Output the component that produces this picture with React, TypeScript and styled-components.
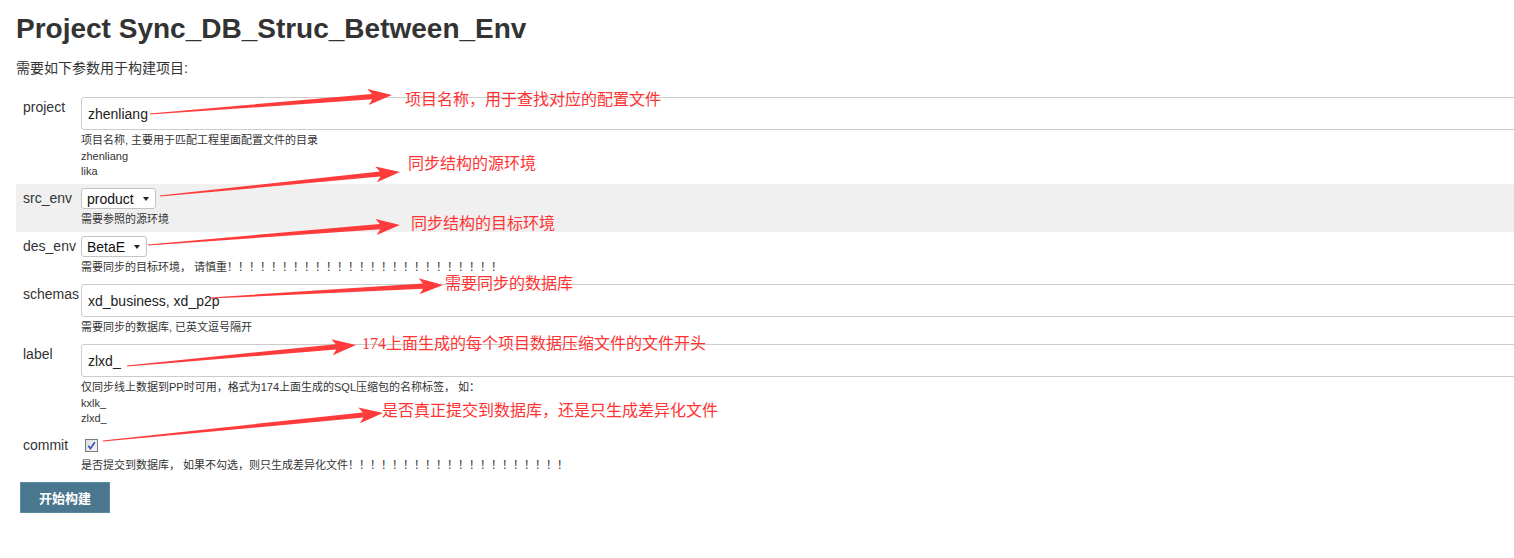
import React from "react";
import styled, { createGlobalStyle } from "styled-components";

const GlobalStyle = createGlobalStyle`
  html, body { margin: 0; padding: 0; background: #fff; overflow: hidden; }
  body {
    font-family: "Liberation Sans", Arial, "Noto Sans CJK SC", sans-serif;
    color: #333;
  }
`;

const Page = styled.div`
  position: relative;
  width: 1514px;
  height: 558px;
  padding-left: 16px;
  box-sizing: border-box;
  overflow: hidden;
`;

const Title = styled.h1`
  margin: 13px 0 0 0;
  font-size: 28px;
  font-weight: bold;
  line-height: 32px;
  color: #333;
`;

const Intro = styled.div`
  margin-top: 14px;
  font-size: 14px;
  line-height: 18px;
  color: #333;
`;

const ParamTable = styled.div`
  margin-top: 16px;
  width: 1510px;
  display: flex;
  flex-direction: column;
`;

const ParamRow = styled.div<{ $shaded?: boolean }>`
  display: grid;
  grid-template-columns: 65px 1fr;
  padding: 4px 0 4.5px;
  background: ${(p) => (p.$shaded ? "#f0f0f0" : "transparent")};
`;

const ParamName = styled.div`
  padding-left: 7px;
  font-size: 14px;
  line-height: 20px;
  color: #333;
`;

const Setting = styled.div`
  display: flex;
  flex-direction: column;
  align-items: flex-start;
  min-width: 0;
`;

const TextInput = styled.input`
  box-sizing: border-box;
  width: 100%;
  height: 33px;
  margin: 0;
  padding: 0 6px;
  border: 1px solid #ccc;
  border-radius: 3px;
  background: #fff;
  font-family: "Liberation Sans", Arial, sans-serif;
  font-size: 14px;
  color: #222;
  outline: none;
`;

const SelectBox = styled.div`
  box-sizing: border-box;
  display: inline-flex;
  align-items: center;
  gap: 9px;
  height: 21px;
  padding: 0 6px 0 5px;
  border: 1px solid #c4c4c4;
  border-radius: 3px;
  background: #fff;
  font-size: 14px;
  color: #111;
`;

const Caret = styled.span`
  width: 0;
  height: 0;
  border-left: 3.5px solid transparent;
  border-right: 3.5px solid transparent;
  border-top: 4px solid #222;
`;

const CheckLine = styled.div`
  height: 20px;
  display: flex;
  align-items: center;
  padding-left: 4px;
`;

const Description = styled.div`
  margin-top: 3px;
  font-size: 11px;
  line-height: 15.5px;
  color: #333;
  white-space: nowrap;
`;

const BuildButton = styled.button`
  box-sizing: border-box;
  margin: 4px 0 0 4px;
  width: 90px;
  height: 31px;
  display: flex;
  align-items: center;
  justify-content: center;
  background: #4b778e;
  border: 1px solid #5a8aa2;
  color: #fff;
  font-family: "Noto Sans CJK SC", sans-serif;
  font-size: 13px;
  font-weight: bold;
  padding: 0;
`;

const Overlay = styled.svg`
  position: absolute;
  top: 0;
  left: 0;
  pointer-events: none;
`;

const Note = styled.span<{ $x: number; $y: number }>`
  position: absolute;
  left: ${(p) => p.$x}px;
  top: ${(p) => p.$y}px;
  font-family: "Liberation Serif", "Noto Sans CJK SC", serif;
  font-size: 16px;
  line-height: 20px;
  color: #ff3333;
  white-space: nowrap;
`;

function arrowPoints(x1: number, y1: number, x2: number, y2: number): string {
  const dx = x2 - x1;
  const dy = y2 - y1;
  const L = Math.hypot(dx, dy);
  const ux = dx / L;
  const uy = dy / L;
  const nx = -uy;
  const ny = ux;
  const head = 22;
  const hw = 8;
  const neck = 2.6;
  const tail = 0.6;
  const bx = x2 - ux * head;
  const by = y2 - uy * head;
  const pts: [number, number][] = [
    [x1 + nx * tail, y1 + ny * tail],
    [bx + nx * neck + ux * 2, by + ny * neck + uy * 2],
    [bx + nx * hw - ux * 2, by + ny * hw - uy * 2],
    [x2, y2],
    [bx - nx * hw - ux * 2, by - ny * hw - uy * 2],
    [bx - nx * neck + ux * 2, by - ny * neck + uy * 2],
    [x1 - nx * tail, y1 - ny * tail],
  ];
  return pts.map((p) => `${p[0].toFixed(1)},${p[1].toFixed(1)}`).join(" ");
}

const arrows: [number, number, number, number][] = [
  [150, 114, 392, 95],
  [160, 196, 400, 172],
  [148, 245, 400, 225],
  [210, 298, 443, 285],
  [127, 366, 356, 345],
  [103, 441, 383, 413],
];

const notes: { x: number; y: number; text: string }[] = [
  { x: 405, y: 90, text: "项目名称，用于查找对应的配置文件" },
  { x: 408, y: 154, text: "同步结构的源环境" },
  { x: 411, y: 214, text: "同步结构的目标环境" },
  { x: 445, y: 274, text: "需要同步的数据库" },
  { x: 362, y: 334, text: "174上面生成的每个项目数据压缩文件的文件开头" },
  { x: 382, y: 401, text: "是否真正提交到数据库，还是只生成差异化文件" },
];

const Checkbox = () => (
  <svg width="13" height="13" viewBox="0 0 13 13">
    <defs>
      <linearGradient id="cbg" x1="0" y1="0" x2="1" y2="1">
        <stop offset="0" stopColor="#dcdce4" />
        <stop offset="1" stopColor="#f6f6f8" />
      </linearGradient>
    </defs>
    <rect x="0.5" y="0.5" width="12" height="12" fill="url(#cbg)" stroke="#7a7a7a" />
    <path d="M3.2 6.6 L5.4 9.6 L9.8 3.2" fill="none" stroke="#2b4ea8" strokeWidth="1.6" />
  </svg>
);

const bangs = (n: number) => "！".repeat(n);

export default function App() {
  return (
    <>
      <GlobalStyle />
      <Page>
        <Title>Project Sync_DB_Struc_Between_Env</Title>
        <Intro>需要如下参数用于构建项目:</Intro>
        <ParamTable>
          <ParamRow>
            <ParamName>project</ParamName>
            <Setting>
              <TextInput readOnly value="zhenliang" />
              <Description>
                项目名称, 主要用于匹配工程里面配置文件的目录
                <br />
                zhenliang
                <br />
                lika
              </Description>
            </Setting>
          </ParamRow>
          <ParamRow $shaded>
            <ParamName>src_env</ParamName>
            <Setting>
              <SelectBox>
                product
                <Caret />
              </SelectBox>
              <Description>需要参照的源环境</Description>
            </Setting>
          </ParamRow>
          <ParamRow>
            <ParamName>des_env</ParamName>
            <Setting>
              <SelectBox>
                BetaE
                <Caret />
              </SelectBox>
              <Description>需要同步的目标环境， 请慎重{bangs(25)}</Description>
            </Setting>
          </ParamRow>
          <ParamRow>
            <ParamName>schemas</ParamName>
            <Setting>
              <TextInput readOnly value="xd_business, xd_p2p" />
              <Description>需要同步的数据库, 已英文逗号隔开</Description>
            </Setting>
          </ParamRow>
          <ParamRow>
            <ParamName>label</ParamName>
            <Setting>
              <TextInput readOnly value="zlxd_" />
              <Description>
                仅同步线上数据到PP时可用，格式为174上面生成的SQL压缩包的名称标签， 如：
                <br />
                kxlk_
                <br />
                zlxd_
              </Description>
            </Setting>
          </ParamRow>
          <ParamRow>
            <ParamName>commit</ParamName>
            <Setting>
              <CheckLine>
                <Checkbox />
              </CheckLine>
              <Description>是否提交到数据库， 如果不勾选，则只生成差异化文件{bangs(20)}</Description>
            </Setting>
          </ParamRow>
        </ParamTable>
        <BuildButton>开始构建</BuildButton>
        <Overlay width="1514" height="558" viewBox="0 0 1514 558">
          {arrows.map((a, i) => (
            <polygon key={i} points={arrowPoints(a[0], a[1], a[2], a[3])} fill="#ff3b3b" />
          ))}
        </Overlay>
        {notes.map((n, i) => (
          <Note key={i} $x={n.x} $y={n.y}>
            {n.text}
          </Note>
        ))}
      </Page>
    </>
  );
}
